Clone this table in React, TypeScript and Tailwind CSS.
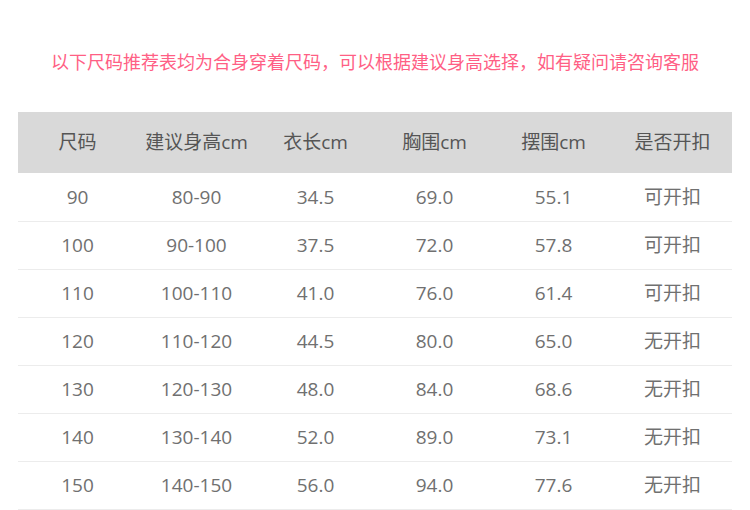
const headers = ["尺码", "建议身高cm", "衣长cm", "胸围cm", "摆围cm", "是否开扣"];

const rows = [
  ["90", "80-90", "34.5", "69.0", "55.1", "可开扣"],
  ["100", "90-100", "37.5", "72.0", "57.8", "可开扣"],
  ["110", "100-110", "41.0", "76.0", "61.4", "可开扣"],
  ["120", "110-120", "44.5", "80.0", "65.0", "无开扣"],
  ["130", "120-130", "48.0", "84.0", "68.6", "无开扣"],
  ["140", "130-140", "52.0", "89.0", "73.1", "无开扣"],
  ["150", "140-150", "56.0", "94.0", "77.6", "无开扣"],
];

export default function App() {
  return (
    <div className="w-[750px] h-[510px] bg-white overflow-hidden font-['Open_Sans','Noto_Sans_CJK_SC',sans-serif]">
      <p className="pt-[49px] h-[112px] text-center text-[18px] leading-[26px] text-[#ff5f85]">
        以下尺码推荐表均为合身穿着尺码，可以根据建议身高选择，如有疑问请咨询客服
      </p>
      <div className="mx-[18px]">
        <div className="grid grid-cols-6 h-[61px] items-center bg-[#d9d9d9] text-[19px] text-[#555]">
          {headers.map((h) => (
            <div key={h} className="text-center">{h}</div>
          ))}
        </div>
        {rows.map((r, idx) => (
          <div
            key={r[0]}
            className={`grid grid-cols-6 items-center border-b border-[#ececec] text-[19px] text-[#707070] ${idx === 0 ? "h-[49px]" : "h-[48px]"}`}
          >
            {r.map((c, i) => (
              <div key={i} className="text-center">{c}</div>
            ))}
          </div>
        ))}
      </div>
    </div>
  );
}
